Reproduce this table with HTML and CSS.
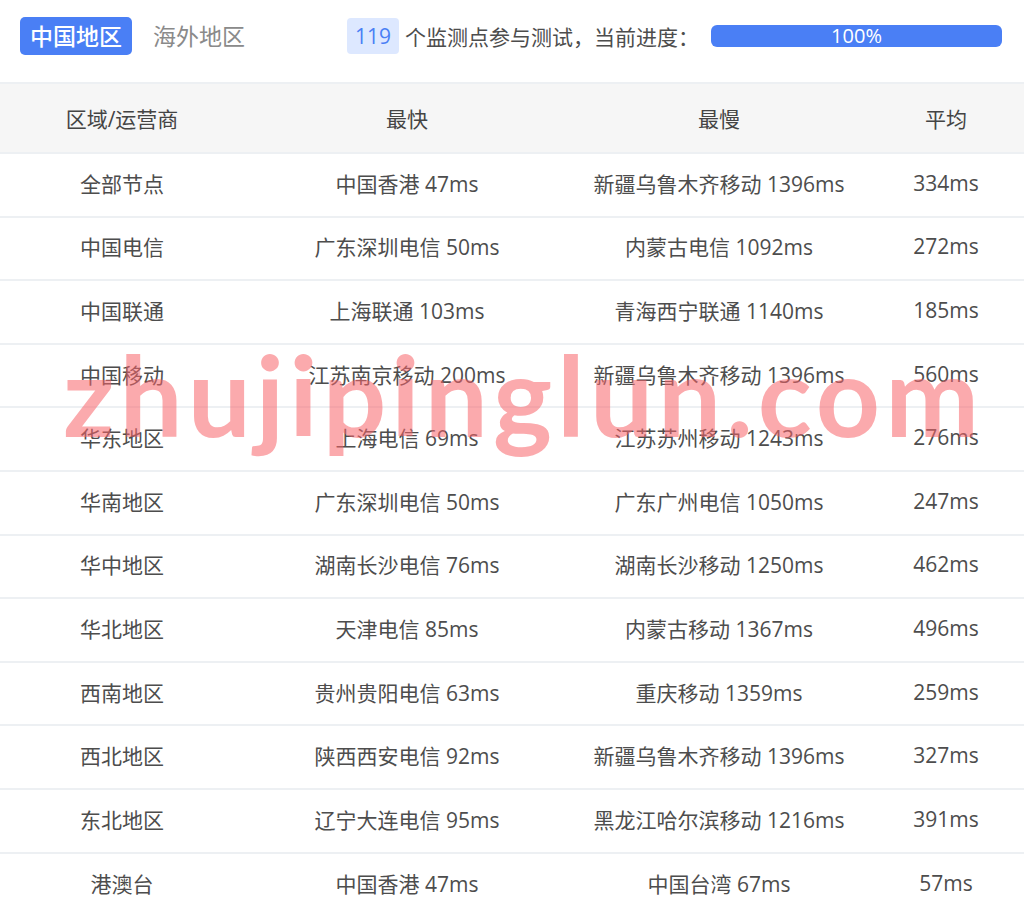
FILE: index.html
```html
<!DOCTYPE html>
<html lang="zh-CN">
<head>
    <meta charset="UTF-8">
    <title>测速结果</title>
    <link rel="stylesheet" href="styles.css">
</head>
<body>
    <div class="topbar">
        <div class="tabs">
            <span class="tab active">中国地区</span>
            <span class="tab">海外地区</span>
        </div>
        <div class="progress_info">
            <span class="count">119</span>
            <span class="label">个监测点参与测试，当前进度：</span>
            <div class="bar"><span>100%</span></div>
        </div>
    </div>

    <table class="result">
        <thead>
            <tr><th>区域/运营商</th><th>最快</th><th>最慢</th><th>平均</th></tr>
        </thead>
        <tbody>
            <tr><td>全部节点</td><td>中国香港 47ms</td><td>新疆乌鲁木齐移动 1396ms</td><td>334ms</td></tr>
            <tr><td>中国电信</td><td>广东深圳电信 50ms</td><td>内蒙古电信 1092ms</td><td>272ms</td></tr>
            <tr><td>中国联通</td><td>上海联通 103ms</td><td>青海西宁联通 1140ms</td><td>185ms</td></tr>
            <tr><td>中国移动</td><td>江苏南京移动 200ms</td><td>新疆乌鲁木齐移动 1396ms</td><td>560ms</td></tr>
            <tr><td>华东地区</td><td>上海电信 69ms</td><td>江苏苏州移动 1243ms</td><td>276ms</td></tr>
            <tr><td>华南地区</td><td>广东深圳电信 50ms</td><td>广东广州电信 1050ms</td><td>247ms</td></tr>
            <tr><td>华中地区</td><td>湖南长沙电信 76ms</td><td>湖南长沙移动 1250ms</td><td>462ms</td></tr>
            <tr><td>华北地区</td><td>天津电信 85ms</td><td>内蒙古移动 1367ms</td><td>496ms</td></tr>
            <tr><td>西南地区</td><td>贵州贵阳电信 63ms</td><td>重庆移动 1359ms</td><td>259ms</td></tr>
            <tr><td>西北地区</td><td>陕西西安电信 92ms</td><td>新疆乌鲁木齐移动 1396ms</td><td>327ms</td></tr>
            <tr><td>东北地区</td><td>辽宁大连电信 95ms</td><td>黑龙江哈尔滨移动 1216ms</td><td>391ms</td></tr>
            <tr><td>港澳台</td><td>中国香港 47ms</td><td>中国台湾 67ms</td><td>57ms</td></tr>
        </tbody>
    </table>

    <div class="watermark">zhujipinglun.com</div>
</body>
</html>
```

FILE: styles.css
```css
*{
    margin: 0;
    padding: 0;
    box-sizing: border-box;

    font-family: "Open Sans", "Noto Sans CJK SC", sans-serif;
}

body{
    width: 1024px;
    background-color: #fff;
    color: #4d4d4d;
    position: relative;
}

.topbar{
    display: flex;
    align-items: center;
    height: 82px;
    padding: 0 22px 10px 20px;

    .tabs{
        display: flex;
        align-items: center;
        gap: 21px;
    }

    .tab{
        font-size: 23px;
        line-height: 38px;
        color: #8a8a8a;
    }

    .active{
        background-color: #4a7ff5;
        color: #fff;
        border-radius: 5px;
        padding: 0 10px;
        font-weight: 500;
    }
}

.progress_info{
    display: flex;
    align-items: center;
    margin-left: 102px;
    flex: 1;

    .count{
        background-color: #dde8ff;
        color: #4a7ff5;
        font-size: 21px;
        line-height: 36px;
        padding: 0 8px;
        border-radius: 4px;
    }

    .label{
        font-size: 21px;
        color: #4d4d4d;
        margin-left: 6px;
    }

    .bar{
        flex: 1;
        margin-left: 12px;
        height: 22px;
        background-color: #4a7ff5;
        border-radius: 6px;
        text-align: center;

        span{
            display: block;
            color: #fff;
            font-size: 20px;
            line-height: 22px;
        }
    }
}

.result{
    width: 100%;
    border-collapse: collapse;
    table-layout: fixed;

    th, td{
        text-align: center;
        font-size: 21px;
        font-weight: 400;
        border-top: 2px solid #edf0f3;
    }

    th{
        height: 70px;
        background-color: #f6f6f6;
        color: #444;
    }

    td{
        height: 63.6px;
        padding-bottom: 4px;
        color: #4d4d4d;
    }

    th:nth-child(1){ width: 244px; }
    th:nth-child(2){ width: 326px; }
    th:nth-child(3){ width: 298px; }
}

.watermark{
    position: absolute;
    left: 63px;
    top: 338px;
    font-family: Lato, sans-serif;
    font-weight: 700;
    font-size: 112px;
    line-height: 1;
    letter-spacing: 5px;
    color: rgba(248, 100, 105, 0.55);
    pointer-events: none;
}
```
